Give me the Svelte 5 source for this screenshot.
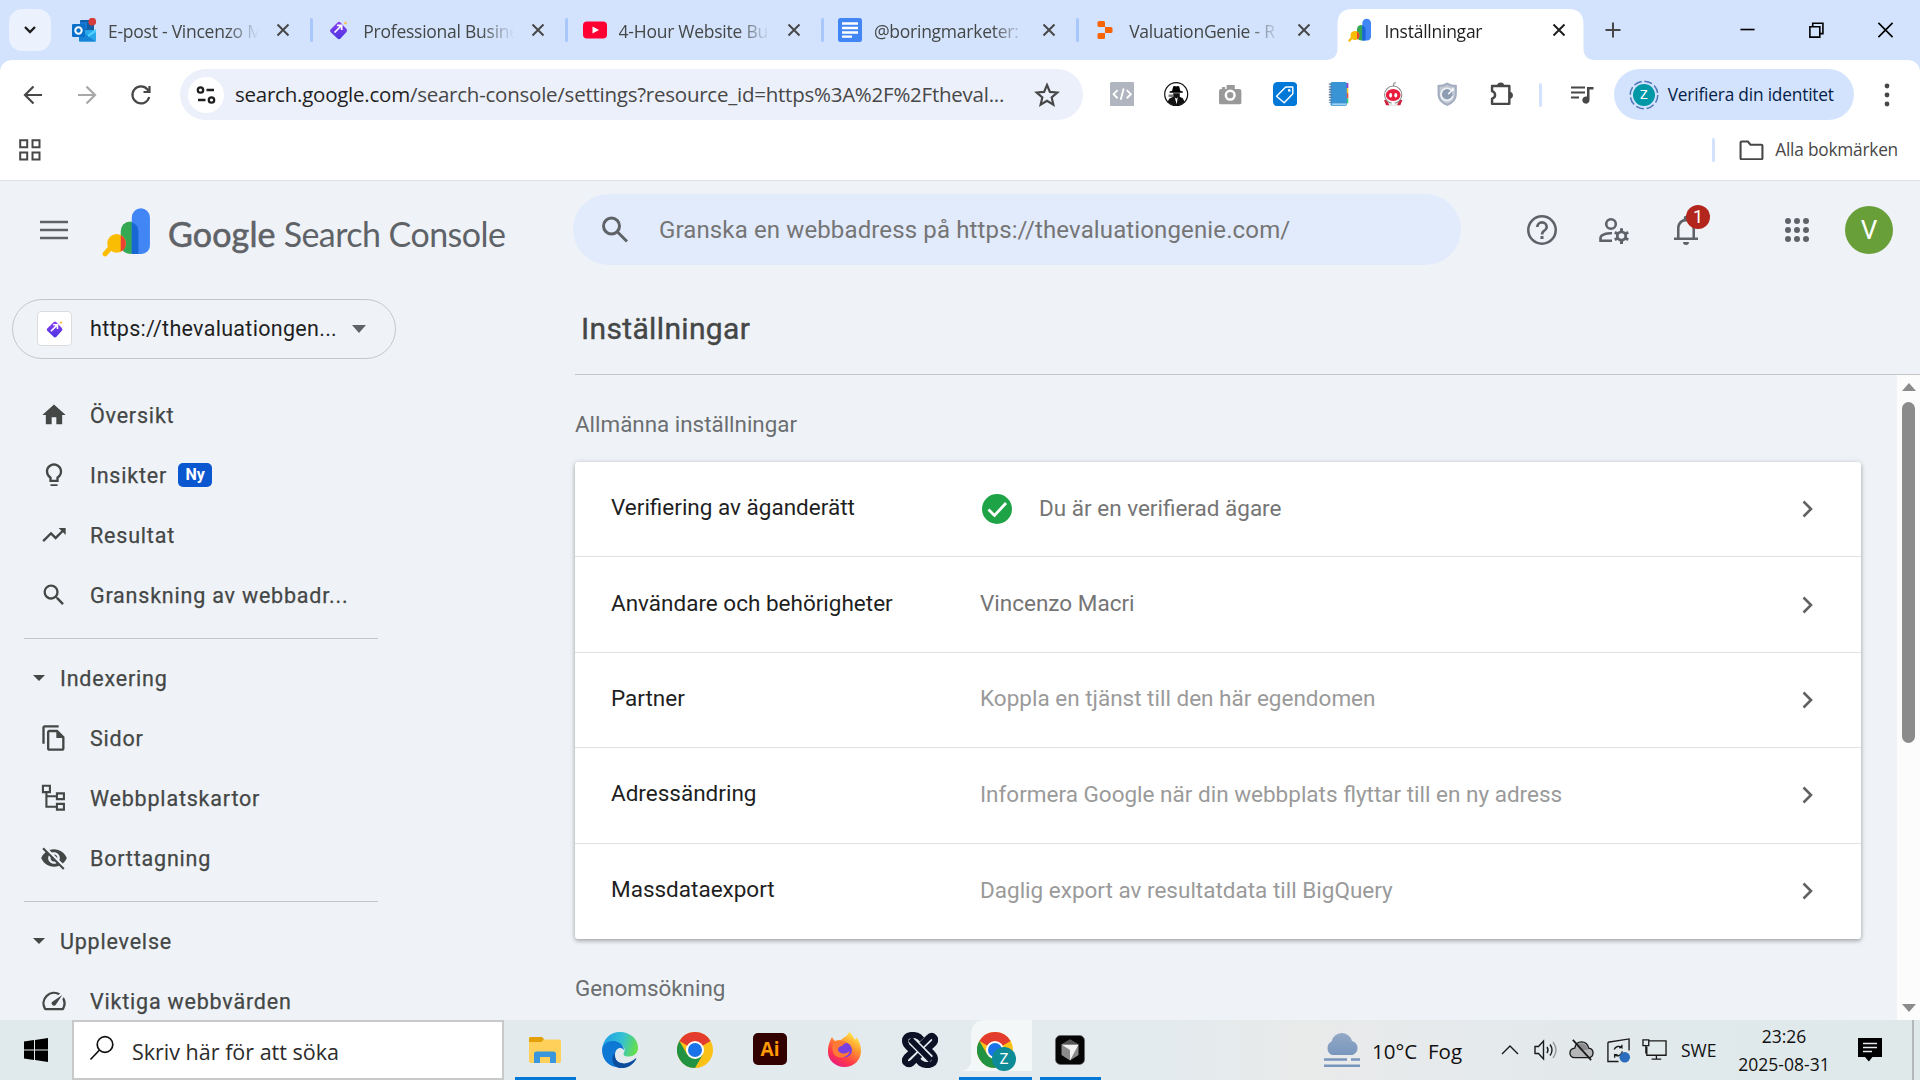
<script>
  const gem = '<defs><linearGradient id="gem" x1="0" y1="0" x2="0" y2="1"><stop offset="0" stop-color="#8a3ff0"/><stop offset="1" stop-color="#4b35e0"/></linearGradient></defs><path d="M3.5 11.5 10.5 4.5q1.5-1.5 3 0l6 6.5q1.2 1.5 0 3L13.5 20.500q-1.500 1.500-3 0L3.500 14q-1-1.300 0-2.500z" fill="url(#gem)"/><path d="m7.500 14.500 7-7M10 7.300h4.700V12" stroke="#fff" stroke-width="1.700" fill="none"/><circle cx="18.500" cy="5" r="1.300" fill="#fbbf4a"/>';
  const gsc = '<path d="m1.500 22.500 4-4.500" stroke="#fbbc04" stroke-width="2.400" stroke-linecap="round"/><rect x="9" y="7" width="9" height="15.500" rx="4.500" fill="#34a853"/><path d="M14.300 5a4.350 4.350 0 0 1 8.700 0v13a4 4 0 0 1-4 4.500h-4.700z" fill="#4285f4"/><path d="M14.300 7.400a4.500 4.500 0 0 1 3.200 4.100v11h-3.200z" fill="#1967d2"/><circle cx="7" cy="17.500" r="4.500" fill="#fbbc04"/><path d="M9 13.500a4.500 4.500 0 0 1 0 8z" fill="#ea4335"/>';

  const tabs = [
    { title: 'E-post - Vincenzo M', icon: '<rect x="8" y="2" width="14" height="13" rx="1" fill="#0f5ea8"/><path d="M8 4h7v7H8z" fill="#1976d2"/><path d="M7 12h17v10.500q0 1-1 1H8q-1 0-1-1z" fill="#28a8ea"/><path d="m7 12 17 11.500H8q-1 0-1-1z" fill="#1584d8"/><path d="M16 16.500 24 11v3l-8 5z" fill="#50d0ff"/><rect x="0" y="6" width="13" height="13" rx="1.200" fill="#0a6fc8"/><circle cx="6.500" cy="12.500" r="3.200" fill="none" stroke="#fff" stroke-width="2"/><circle cx="20.300" cy="3.700" r="3.900" fill="#d83b3b"/>' },
    { title: 'Professional Busine', icon: gem },
    { title: '4-Hour Website Bu', icon: '<rect y="3.500" width="24" height="17" rx="4" fill="#ff0033"/><path d="m9.500 8.500 6.500 3.500-6.500 3.500z" fill="#fff"/>' },
    { title: '@boringmarketer:', icon: '<rect width="24" height="24" rx="2.500" fill="#4285f4"/><path d="M4 5.500h16M4 10h16M4 14.500h16M4 18.700h10" stroke="#fff" stroke-width="2.300"/>' },
    { title: 'ValuationGenie - R', icon: '<path d="M4.500 4.500a1.500 1.500 0 0 1 1.500-1.500h4.500a1.500 1.500 0 0 1 1.500 1.500V9H6a1.500 1.500 0 0 1-1.500-1.500zM12 9h6a1.500 1.500 0 0 1 1.500 1.500v3A1.500 1.500 0 0 1 18 15h-6zM4.500 16.500A1.500 1.500 0 0 1 6 15h6v4.500a1.500 1.500 0 0 1-1.500 1.500H6a1.500 1.500 0 0 1-1.500-1.500z" fill="#f96300"/>' },
    { title: 'Inställningar', icon: gsc, active: true }
  ];

  const extensions = [
    '<rect width="24" height="24" rx="1.500" fill="#b1b5c0"/><path d="m7.500 8-4 4 4 4m9-8 4 4-4 4M13.500 6.500l-3 11" stroke="#fff" stroke-width="1.800" fill="none"/>',
    '<circle cx="12" cy="12" r="11.300" fill="#fff" stroke="#111" stroke-width="1.200"/><path d="M8 8.500 9 4.500q1.500-1 3 0 1.500-1 3 0l1 4 2.500.8v1.200H5.500V9.300z" fill="#000"/><path d="M9 11h6.500v3.500l3 1.500 2 4Q12 26.500 3.500 20L5 16.500l4-2z" fill="#111"/><path d="m10.500 15 1.500 1.500 1.500-1.500-1 7z" fill="#fff"/><path d="M4.500 13.500h5" stroke="#777" stroke-width="2.400"/>',
    '<path d="M1 9Q1 7 3 7h1V5h3v2h1.500V3h8v4H21q2 0 2 2v11.500q0 1.500-1.500 1.500h-19Q1 22 1 20.500z" fill="#999"/><circle cx="12" cy="13" r="4.300" fill="none" stroke="#fff" stroke-width="2.400"/>',
    '<rect width="24" height="24" rx="4.500" fill="#0078d7"/><path d="M3.500 14 12.500 5h7v6.500L11 20.500z" fill="none" stroke="#fff" stroke-width="1.400" stroke-linejoin="round"/><circle cx="16" cy="8.300" r="1.300" fill="#fff"/>',
    '<path d="M18 1h3v5h-3z" fill="#9c35c9"/><path d="M18 6h3v5h-3z" fill="#f7c52d"/><path d="M18 11h3v5h-3z" fill="#ef4d3c"/><path d="M18 16h3v5h-3z" fill="#3ccb72"/><rect x="3.500" width="16" height="23.500" rx="1.500" fill="#3994d6"/><path d="M5 21h14v2H5z" fill="#9fd0f0"/><path d="M3.300 1.500v19" stroke="#55799a" stroke-width="3" stroke-dasharray="1.300 1.300"/>',
    '<path d="M12.500 4.500V2q.5-1.700 2-1" stroke="#777" fill="none"/><path d="M3 18q9-4 18 0l-2 5h-4l-3-3-3 3H5z" fill="#d3203a"/><path d="M6 18h12l-2.500 5.500h-7z" fill="#e8e8e8"/><circle cx="12" cy="12.500" r="8.500" fill="#fff" stroke="#888"/><ellipse cx="12" cy="12.800" rx="7.300" ry="6" fill="#e91d3e"/><ellipse cx="9.500" cy="13" rx="1.400" ry="2.200" fill="#fff"/><ellipse cx="14.500" cy="13" rx="1.400" ry="2.200" fill="#fff"/><circle cx="12" cy="21" r="1.500" fill="#fff"/>',
    '<path d="M2.500 3Q8 3 12 .5 16 3 21.500 3v9q0 8-9.500 11.500Q2.500 20 2.500 12z" fill="#a3adc0"/><path d="M4.500 5Q8.500 5 12 3q3.500 2 7.500 2v7q0 6.500-7.500 9.500Q4.500 18.500 4.500 12z" fill="#c3cad6"/><circle cx="12" cy="12" r="5" fill="#8e9cb1"/><path d="M16.500 8.500a6 6 0 1 0 1 5.500M13 12l4-4" stroke="#eef1f5" stroke-width="1.600" fill="none"/><circle cx="17.500" cy="7.500" r="1.300" fill="#fff"/>'
  ];

  const primaryNav = [
    { label: 'Översikt', icon: '<path d="M10 20v-6h4v6h5v-8h3L12 3 2 12h3v8z"/>' },
    { label: 'Insikter', badge: 'Ny', icon: '<path d="M9 21.500h6V20H9zm.500.500M12 2C8.140 2 5 5.140 5 9c0 2.380 1.190 4.470 3 5.740V18h8v-3.260c1.810-1.270 3-3.360 3-5.740 0-3.860-3.140-7-7-7zm2.850 11.100-.850.600V16h-4v-2.300l-.850-.600A4.997 4.997 0 0 1 7 9c0-2.760 2.240-5 5-5s5 2.240 5 5c0 1.630-.800 3.160-2.150 4.100z"/>' },
    { label: 'Resultat', icon: '<path d="m16 6 2.290 2.290-4.880 4.880-4-4L2 16.590 3.410 18l6-6 4 4 6.300-6.290L22 12V6z"/>' },
    { label: 'Granskning av webbadr...', icon: '<path d="M15.500 14h-.790l-.280-.270A6.471 6.471 0 0 0 16 9.500 6.500 6.500 0 1 0 9.500 16c1.610 0 3.090-.590 4.230-1.570l.270.280v.790l5 4.990L20.490 19zm-6 0C7.010 14 5 11.990 5 9.500S7.010 5 9.500 5 14 7.010 14 9.500 11.990 14 9.500 14z"/>' }
  ];
  const indexNav = [
    { label: 'Sidor', icon: '<path d="M16 1H4c-1.100 0-2 .900-2 2v14h2V3h12zm-1 4H8c-1.100 0-1.990.900-1.990 2L6 21c0 1.100.890 2 1.990 2H19c1.100 0 2-.900 2-2V11zM8 21V7h6v5h5v9z"/>' },
    { label: 'Webbplatskartor', icon: '<path d="M2.500 1.500h6v5.500h-6zM14.500 8h6v5h-6zM14.500 17h6v5h-6zM5.500 7v12.500h9M5.500 10.500h9" fill="none" stroke="#444746" stroke-width="1.800"/>' },
    { label: 'Borttagning', icon: '<path d="M12 7c2.760 0 5 2.240 5 5 0 .650-.130 1.260-.360 1.830l2.920 2.920c1.510-1.260 2.700-2.890 3.430-4.750-1.730-4.390-6-7.500-11-7.500-1.400 0-2.740.250-3.980.700l2.160 2.160C10.740 7.130 11.350 7 12 7zM2 4.270l2.280 2.280.460.460A11.804 11.804 0 0 0 1 12c1.730 4.390 6 7.500 11 7.500 1.550 0 3.030-.300 4.380-.840l.420.420L19.730 22 21 20.730 3.270 3zM7.530 9.800l1.550 1.550c-.050.210-.080.430-.080.650 0 1.660 1.340 3 3 3 .220 0 .440-.030.650-.080l1.550 1.550c-.670.330-1.410.530-2.200.530-2.760 0-5-2.240-5-5 0-.790.200-1.530.530-2.200zm4.310-.780 3.150 3.150.020-.160c0-1.660-1.340-3-3-3z"/>' }
  ];
  const experienceNav = [
    { label: 'Viktiga webbvärden', icon: '<path d="m20.380 8.570-1.230 1.850a8 8 0 0 1-.220 7.580H5.070A8 8 0 0 1 15.580 6.850l1.850-1.230A10 10 0 0 0 3.350 19a2 2 0 0 0 1.720 1h13.850a2 2 0 0 0 1.740-1 10 10 0 0 0-.270-10.440zm-9.790 6.840a2 2 0 0 0 2.830 0l5.660-8.490-8.490 5.660a2 2 0 0 0 0 2.830z"/>' }
  ];

  const settings = [
    { name: 'Verifiering av äganderätt', value: 'Du är en verifierad ägare', verified: true },
    { name: 'Användare och behörigheter', value: 'Vincenzo Macri' },
    { name: 'Partner', value: 'Koppla en tjänst till den här egendomen', hint: true },
    { name: 'Adressändring', value: 'Informera Google när din webbplats flyttar till en ny adress', hint: true },
    { name: 'Massdataexport', value: 'Daglig export av resultatdata till BigQuery', hint: true }
  ];

  const chrome = '<circle cx="18" cy="18" r="18" fill="#fbc116"/><path d="M18 18 2.400 9A18 18 0 0 1 33.600 9z" fill="#e33b2e"/><path d="M2.400 9A18 18 0 0 0 18 36l7.800-13.500L18 26l-7.800-3.500z" fill="#229342"/><circle cx="18" cy="18" r="9" fill="#fff"/><circle cx="18" cy="18" r="7" fill="#1a73e8"/>';
  const apps = [
    { name: 'explorer', open: true, icon: '<path d="M2 6.500Q2 5 3.500 5h10l2.500 2.500h16q2 0 2 2V29q0 2-2 2H4q-2 0-2-2z" fill="#ffd05a"/><path d="M2 6.500Q2 5 3.500 5h11.500l2 2-2.500 3H2z" fill="#e3a008"/><path d="M7 31V22q0-2.500 2.500-2.500h17q2.500 0 2.500 2.500v9h-6v-6H13v6z" fill="#3a96dd"/>' },
    { name: 'edge', icon: '<defs><linearGradient id="ed" x1="0" x2="1" y1=".3" y2=".5"><stop stop-color="#1f9fe8"/><stop offset=".55" stop-color="#35c1d2"/><stop offset="1" stop-color="#66df4a"/></linearGradient></defs><path d="M0 18C1 7 8 0 18 0s18 7 18 15.500c0 6-4.500 9-9.500 9-4 0-6-1.500-4.500-4 2-4-1-8.500-6-8.500C9 12 2 14 0 18z" fill="url(#ed)"/><path d="M0 18C1 11 8 8 14 9.500c5 1.200 8 5 8 8.500-3-4-9-2-9 5 0 7 6 11 12 10.500C14 39 0 32 0 18z" fill="#0f78d4"/><path d="M13 21c-2 6 4 12 12 10 3-.700 6-2.500 8.500-4.500.800-.500 1 .200.500 1C30 34 23 37.500 16.500 35.800 9 33 9 24 13 21z" fill="#0c4c9c"/>' },
    { name: 'chrome', icon: chrome },
    { name: 'illustrator', icon: '<rect x="1" y="1" width="34" height="32" rx="5" fill="#330000"/><text x="18" y="24" text-anchor="middle" font-family="Open Sans, sans-serif" font-weight="700" font-size="19" fill="#ff9a00">Ai</text>' },
    { name: 'firefox', icon: '<defs><linearGradient id="fx" x1=".8" y1="0" x2=".2" y2="1"><stop stop-color="#fff44f"/><stop offset=".35" stop-color="#ff9a2e"/><stop offset=".7" stop-color="#ff3b47"/><stop offset="1" stop-color="#e31587"/></linearGradient></defs><path d="M5 5c1 2 2 3 3 4q3-1.500 6-1C17 5 21 4 22 0c4 3 5 6 6 8 1-1 1-2 1-3 3 3 5 8 5 14 0 9-7 16-16.500 16S1 28 1 20c0-6 1-9 4-15z" fill="url(#fx)"/><circle cx="17.500" cy="18" r="7.500" fill="#7a3fe0"/><path d="M6 12q4-4 9-3 3 0 4 2-3 1-4 3-3 0-4 3c0 5 8 6 12 2-2 8-14 9-17 1-1-3-1-6 0-8z" fill="#ff7a36"/>' },
    { name: 'knot', icon: '<g fill="none" stroke-linejoin="round" stroke-linecap="butt"><g stroke="#0c1126" stroke-width="6"><path d="M20 7.500 17.500 5Q14 2.500 9 3 3 4 3 9q0 3 3 6l4.500 4"/><path d="M16 28.500 18.500 31q3.500 2.500 8.500 2 6-1 6-6 0-3-3-6l-4.500-4"/><path d="M14 18 26 6q3.500-3.500 6-1t0 6L22 20.500"/><path d="M14.500 15.500 4.500 25q-3 3.500-.5 6t6 0L22 19"/></g><path d="m10 9 18 18" stroke="#e3ebee" stroke-width="8.500"/><path d="M8 7 29 28.500" stroke="#0c1126" stroke-width="5.500"/></g>' },
    { name: 'chrome-profile', open: true, active: true, icon: chrome },
    { name: 'cursor', open: true, icon: '<rect x="3.500" y="3.500" width="29" height="29" rx="5" fill="#060606" stroke="#666" stroke-width=".7"/><path d="m18 7.500 8.500 5v10.500L18 28.500 9.500 23V12.500z" fill="#8a8a8a"/><path d="M9.500 12.500h17L18 28.500V18z" fill="#f2f2f2"/><path d="m18 7.500 8.500 5h-17z" fill="#555"/>' }
  ];
</script>

{#snippet svg(inner, cls, box = 24)}
  <svg class={cls} viewBox="0 0 {box} {box}" aria-hidden="true">{@html inner}</svg>
{/snippet}

{#snippet navItem(item)}
  <a class="nav-item" href="#nav">
    {@render svg(item.icon, 'nav-icon')}
    <span class="t">{item.label}</span>
    {#if item.badge}<b class="new">{item.badge}</b>{/if}
  </a>
{/snippet}

{#snippet navGroup(label, items)}
  <hr class="rule" />
  <div class="group"><i class="caret"></i><span class="t">{label}</span></div>
  {#each items as item}{@render navItem(item)}{/each}
{/snippet}

<div class="screen">
  <header class="tabstrip">
    <button class="tab-search" aria-label="Sök bland flikar"><svg width="16" height="16" viewBox="0 0 16 16"><path d="m3 5 5 5 5-5" fill="none" stroke="#1f1f1f" stroke-width="2.400" /></svg></button>
    {#each tabs as tab, i}
      <div class="tab" class:active={tab.active} class:sep={i < 4}>
        {@render svg(tab.icon, 'favicon')}
        <span class="tab-title"><span class="t">{tab.title}</span></span>
        <svg class="close" viewBox="0 0 14 14"><path d="m1.500 1.500 11 11m0-11-11 11" /></svg>
      </div>
    {/each}
    <svg class="new-tab" viewBox="0 0 16 16"><path d="M8 .5v15M.5 8h15" /></svg>
    <div class="window-controls">
      <svg viewBox="0 0 18 18"><path d="M1.500 8.500h15" /></svg>
      <svg viewBox="0 0 18 18"><path d="M2 5.500h10.500V16.500H2zM5 5.500V1.800h10.800v11h-3.300" /></svg>
      <svg viewBox="0 0 18 18"><path d="m1.500 1.500 15 15m0-15-15 15" /></svg>
    </div>
  </header>

  <div class="toolbar">
    <div class="history">
      <svg viewBox="0 0 24 24"><path d="M21 12H4m8.500-8.500L4 12l8.500 8.500" /></svg>
      <svg class="off" viewBox="0 0 24 24"><path d="M3 12h17m-8.500-8.500L20 12l-8.500 8.500" /></svg>
      <svg viewBox="0 0 24 24"><path d="M20.200 14A8.500 8.500 0 1 1 18.500 6.500L20 8.500M20.500 3v6h-6" /></svg>
    </div>
    <div class="omnibox">
      <span class="site"><svg viewBox="0 0 24 24"><circle cx="6.500" cy="7" r="2.700" /><path d="M12.500 7H20M4 17h7.500" /><circle cx="17.500" cy="17" r="2.700" /></svg></span>
      <span class="url t"><em>search.google.com</em>/search-console/settings?resource_id=https%3A%2F%2Ftheval...</span>
      <svg class="star" viewBox="0 0 24 24"><path d="m12 2.800 2.700 6.300 6.800.6-5.200 4.500 1.600 6.700L12 17.300l-5.900 3.600 1.600-6.700-5.200-4.500 6.800-.6z" /></svg>
    </div>
    <div class="extensions">
      {#each extensions as e}{@render svg(e, 'ext')}{/each}
      <svg class="ext" viewBox="0 0 24 24"><path d="M3 4h17v17.500H3v-5q3-1 3-3.700T3 9z" fill="none" stroke="#474747" stroke-width="2.400" stroke-linejoin="round" /><path d="M8.500 4a3 3 0 0 1 6 0zM20 10a3 3 0 0 1 0 6z" fill="#474747" stroke="#474747" /></svg>
    </div>
    <i class="divider"></i>
    <svg class="music" viewBox="0 0 24 24"><path d="M1 5.500h14M1 10.500h14M1 15.500h8" stroke="#474747" stroke-width="2" /><path d="M17 5h6.500v2.500h-4V18a3.600 3.600 0 1 1-2.500-3.400z" fill="#474747" /></svg>
    <div class="profile">
      <span class="ring"><svg viewBox="0 0 30 30"><circle cx="15" cy="15" r="13.800" /></svg><b>Z</b></span>
      <span class="t">Verifiera din identitet</span>
    </div>
    <svg class="kebab" viewBox="0 0 8 28"><circle cx="4" cy="5" r="2.400" /><circle cx="4" cy="14" r="2.400" /><circle cx="4" cy="23" r="2.400" /></svg>
  </div>

  <div class="bookmarks">
    <svg class="grid" viewBox="0 0 22 22"><path d="M1.200 1.200h7v7h-7zM13.500 1.200h7v7h-7zM1.200 13.500h7v7h-7zM13.500 13.500h7v7h-7z" /></svg>
    <i class="divider"></i>
    <svg class="folder" viewBox="0 0 24 20"><path d="M1.500 2.500q0-1 1-1h6l2.500 3h10.500q1 0 1 1v12q0 1-1 1h-19q-1 0-1-1z" /></svg>
    <span class="t">Alla bokmärken</span>
  </div>

  <div class="page">
    <header class="console-bar">
      <svg class="menu" viewBox="0 0 28 20"><path d="M0 2h28M0 10h28M0 18h28" /></svg>
      {@render svg(gsc, 'logo')}
      <h1><span class="google t">Google</span><span class="sc t">Search Console</span></h1>
      <div class="inspect">
        <svg class="lens" viewBox="0 0 28 28"><circle cx="10.500" cy="10" r="8" /><path d="m16.500 16 9.500 9.500" /></svg>
        <span class="t">Granska en webbadress på https://thevaluationgenie.com/</span>
      </div>
      <div class="actions">
        <svg class="help" viewBox="0 0 24 24"><path d="M11 18h2v-2h-2zm1-16A10 10 0 1 0 12 22 10 10 0 0 0 12 2zm0 18.300A8.300 8.300 0 1 1 12 3.700a8.300 8.300 0 0 1 0 16.600zM12 6a4 4 0 0 0-4 4h1.800a2.200 2.200 0 0 1 4.400 0c0 2-3 1.750-3 5H13c0-2.250 3-2.500 3-5a4 4 0 0 0-4-4z" /></svg>
        <svg class="users" viewBox="0 0 32 32"><circle cx="13" cy="10" r="4.800" fill="none" stroke="#5f6368" stroke-width="2.600" /><path d="M14 19.300q-6-.5-10 2-1.500 1-1.500 2.700v2.700h11.500" fill="none" stroke="#5f6368" stroke-width="2.600" /><circle cx="23.500" cy="22" r="4.200" fill="none" stroke="#5f6368" stroke-width="2.800" /><path d="M23.500 14.200v3M23.500 27v3M16.800 18.200l2.600 1.500M27.600 24.300l2.600 1.500M16.800 25.800l2.600-1.500M27.600 19.700l2.600-1.500" stroke="#5f6368" stroke-width="3" /></svg>
        <span class="bell"><svg viewBox="0 0 24 24"><path d="M12 22a2 2 0 0 0 2-2h-4a2 2 0 0 0 2 2zm6-6v-5c0-3.070-1.630-5.640-4.500-6.320V4a1.500 1.500 0 0 0-3 0v.680C7.640 5.360 6 7.920 6 11v6H4v1.700h16V17h-2zm-1.700 1H7.700v-6c0-2.480 1.510-4.700 4.300-4.700s4.300 2.220 4.300 4.700z" /></svg><b>1</b></span>
        <svg class="waffle" viewBox="0 0 24 24"><g><circle cx="3" cy="3" r="3" /><circle cx="12" cy="3" r="3" /><circle cx="21" cy="3" r="3" /><circle cx="3" cy="12" r="3" /><circle cx="12" cy="12" r="3" /><circle cx="21" cy="12" r="3" /><circle cx="3" cy="21" r="3" /><circle cx="12" cy="21" r="3" /><circle cx="21" cy="21" r="3" /></g></svg>
        <span class="avatar">V</span>
      </div>
    </header>

    <div class="body">
      <nav class="sidebar">
        <div class="property">
          <span class="thumb">{@render svg(gem, 'thumb-icon')}</span>
          <span class="t">https://thevaluationgen...</span>
          <i class="caret big"></i>
        </div>
        {#each primaryNav as item}{@render navItem(item)}{/each}
        {@render navGroup('Indexering', indexNav)}
        {@render navGroup('Upplevelse', experienceNav)}
      </nav>

      <main>
        <h2><span class="t">Inställningar</span></h2>
        <div class="scroller">
          <div class="content">
            <h3><span class="t">Allmänna inställningar</span></h3>
            <section class="card">
              {#each settings as s}
                <div class="row">
                  <span class="name t">{s.name}</span>
                  {#if s.verified}<svg class="check" viewBox="0 0 30 30"><circle cx="15" cy="15" r="15" fill="#1ea446" /><path d="m6.500 15.500 6 6L24 9" fill="none" stroke="#fff" stroke-width="2.800" /></svg>{/if}
                  <span class="value t" class:hint={s.hint}>{s.value}</span>
                  <svg class="chevron" viewBox="0 0 12 18"><path d="m1.500 1.500 7.500 7.500-7.500 7.500" /></svg>
                </div>
              {/each}
            </section>
            <h3><span class="t">Genomsökning</span></h3>
          </div>
          <div class="scrollbar"><i class="up"></i><i class="thumb-bar"></i><i class="down"></i></div>
        </div>
      </main>
    </div>
  </div>

  <footer class="taskbar">
    <svg class="start" viewBox="0 0 24 24"><path d="M0 3.500 10 2v9.500H0zM11 1.900 24 0v11.500H11zM0 12.500h10V22L0 20.500zM11 12.500h13V24l-13-1.900z" /></svg>
    <div class="find"><svg viewBox="0 0 26 26"><circle cx="16" cy="9.500" r="7.800" /><path d="M10.500 15 1.500 24.500" /></svg><span class="t">Skriv här för att söka</span></div>
    <div class="apps">
      {#each apps as app}
        <div class="app" class:open={app.open} class:active={app.active}>
          {@render svg(app.icon, 'app-icon', 36)}
          {#if app.active}<b class="app-badge">Z</b>{/if}
        </div>
      {/each}
    </div>
    <div class="tray">
      <svg class="weather" viewBox="0 0 36 36"><defs><linearGradient id="fog" x1="0" y1="0" x2="0" y2="1"><stop stop-color="#93a9c6" /><stop offset="1" stop-color="#7896bd" /></linearGradient></defs><path d="M8 23a7.500 7.500 0 0 1-.5-13.500A10.500 10.500 0 0 1 28 9a7.300 7.300 0 0 1 .5 14z" fill="url(#fog)" /><path d="M0 27.500h23M27 27.500h9M0 33.700h36" stroke="#7896bd" stroke-width="2.600" /></svg>
      <span class="temp t">10°C</span><span class="fog t">Fog</span>
      <svg class="up-arrow" viewBox="0 0 18 10"><path d="m1 9 8-8 8 8" /></svg>
      <svg class="vol" viewBox="0 0 24 24"><path d="M1 8.500h3.500L9.500 3v18l-5-5.500H1zM13 9q2 3 0 6M16 6.500q4 5.500 0 11" /><path d="M19 4q6 8 0 16" class="dim" /></svg>
      <svg class="cloud" viewBox="0 0 26 24"><path d="M6 20.500q-5-.5-5-5t5-5Q7 4 13 4t7.500 6.500q4.500.5 4.500 5t-5 5z" fill="#b4b6b8" /><path d="M8 8q5-5 10 0l2 4-8 1z" fill="#8a8c8e" stroke="none" /><path d="m4 2 19 21" stroke-width="1.800" /></svg>
      <svg class="sync" viewBox="0 0 26 28"><path d="M2 5.500 24 2v12M2 5.500v20h11" /><path d="M8.500 13a5 5 0 0 1 8-2v-3m0 3h-3M17 15a5 5 0 0 1-8 3.500v3m0-3h3" /><circle cx="19.500" cy="21" r="5.500" /></svg>
      <svg class="net" viewBox="0 0 26 24"><path d="M7 3h18v15H5V9M15 18v4M10 22h10M1 2h6v6H1zM4 8v8" /></svg>
      <span class="lang t">SWE</span>
      <div class="clock"><span class="t">23:26</span><span class="t">2025-08-31</span></div>
      <svg class="notes" viewBox="0 0 24 24"><path d="M0 0h24v19H14.500l-3.700 4.500L7 19H0z" /><path d="M5 5.500h14M5 9.500h14M5 13.500h9" stroke="#e6ebed" stroke-width="1.300" /></svg>
    </div>
    <i class="desktop-edge"></i>
  </footer>
</div>

<style>
  :global(body) { margin: 0; }
  .screen { width: 1920px; height: 1080px; overflow: hidden; display: flex; flex-direction: column; font-family: 'Open Sans', 'Noto Sans', sans-serif; background: #fff; }
  .screen :global(*) { box-sizing: border-box; }
  .screen :global(svg) { display: block; flex: none; }
  .t { white-space: nowrap; }
  button { border: 0; padding: 0; }

  /* Browser tabs */
  .tabstrip { height: 72px; margin-bottom: -12px; flex: none; background: #d3e3fd; display: flex; align-items: flex-start; }
  .tab-search { width: 42px; height: 42px; margin: 9px 6px 0 9px; border-radius: 13px; background: #ebf2fe; display: grid; place-items: center; }
  .tab { position: relative; width: 255.300px; height: 60px; padding-left: 15px; display: flex; align-items: center; flex: none; }
  .tab.sep::after { content: ''; flex: none; margin-left: 20px; width: 3px; height: 24px; background: #a8c7fa; border-radius: 2px; }
  .tab :global(.favicon) { width: 24px; height: 24px; margin-right: 12px; z-index: 1; }
  .tab-title { flex: none; width: 160px; margin-right: 8px; font-size: 17.500px; letter-spacing: -0.250px; color: #444746; z-index: 1; line-height: 30px; padding-top: 2px; mask-image: linear-gradient(90deg, #000 118px, transparent 151px); }
  .active .tab-title { color: #1f1f1f; }
  .close { width: 14px; height: 14px; fill: none; stroke: #474747; stroke-width: 2; z-index: 1; }
  .active .close { stroke: #1f1f1f; }
  .active::before { content: ''; position: absolute; left: -8px; top: 9px; width: 270px; height: 51px; clip-path: path('M12 39V15Q12 0 27 0H243Q258 0 258 15V39Q258 51 270 51H0Q12 51 12 39Z'); background: #fff; }
  .new-tab { width: 16px; height: 16px; margin: 22px 0 0 16px; fill: none; stroke: #474747; stroke-width: 2; }
  .window-controls { display: flex; gap: 52px; margin: 21px 26px 0 auto; }
  .window-controls svg { width: 17px; height: 18px; fill: none; stroke: #000; stroke-width: 1.700; }

  /* Address bar */
  .toolbar { height: 69px; flex: none; position: relative; border-radius: 12px 12px 0 0; background: #fff; padding-top: 9px; display: flex; align-items: flex-start; }
  .history { display: flex; gap: 30px; padding: 14px 0 0 21px; width: 180px; }
  .history svg { width: 24px; height: 24px; fill: none; stroke: #474747; stroke-width: 2.200; }
  .history .off { stroke: #a8a8a8; }
  .omnibox { width: 903px; height: 51px; border-radius: 26px; background: #ecf0fa; display: flex; align-items: center; }
  .site { width: 36px; height: 36px; border-radius: 50%; background: #fff; margin: 0 11px 0 8px; display: grid; place-items: center; }
  .site svg { width: 24px; fill: none; stroke: #1f1f1f; stroke-width: 2.300; }
  .url { font-size: 20.500px; color: #474747; letter-spacing: -0.240px; width: 799px; padding-bottom: 2px; }
  .url em { font-style: normal; color: #1f1f1f; }
  .star { width: 26px; fill: none; stroke: #474747; stroke-width: 2; }
  .extensions { display: flex; gap: 29.800px; padding: 13px 0 0 27px; }
  .extensions :global(.ext) { width: 24.400px; height: 24.400px; }
  .divider { width: 3px; height: 24px; background: #d3e3fd; border-radius: 2px; }
  .toolbar .divider { margin: 14px 28px 0 25px; }
  .music { width: 24px; height: 24px; margin: 13px 20px 0 0; }
  .profile { width: 240px; height: 51px; border-radius: 26px; background: #d3e3fd; color: #041e49; display: flex; align-items: center; font-size: 17.300px; letter-spacing: -0.180px; padding-left: 15px; }
  .ring { position: relative; width: 30px; height: 30px; margin-right: 9px; display: grid; place-items: center; }
  .ring svg { position: absolute; inset: 0; fill: none; stroke: #4f77b8; stroke-width: 1.500; stroke-dasharray: 8 2.840; }
  .ring b { width: 22px; height: 22px; border-radius: 50%; background: #0097a7; color: #fff; font: 400 13px/22px Roboto, sans-serif; text-align: center; }
  .kebab { width: 8px; height: 28px; margin: 12px 0 0 29px; fill: #474747; }
  .bookmarks { height: 51px; flex: none; display: flex; align-items: center; padding: 0 22px 9px 19px; color: #474747; font-size: 17.300px; letter-spacing: -0.220px; }
  .bookmarks .t { padding-bottom: 2px; }
  .grid { width: 22px; fill: none; stroke: #474747; stroke-width: 2; margin-right: auto; }
  .bookmarks .divider { margin-right: 24px; }
  .folder { width: 25px; fill: none; stroke: #474747; stroke-width: 2; margin-right: 11px; }

  /* Console header */
  .page { flex: 1; min-height: 0; border-top: 1.500px solid #dfe2e5; background: #eff3f8; font-family: Roboto, sans-serif; display: flex; flex-direction: column; overflow: hidden; }
  .console-bar { height: 98px; flex: none; display: flex; align-items: center; padding: 0 27px 0 40px; }
  .menu { width: 28px; stroke: #5f6368; stroke-width: 2.700; margin-right: 34px; }
  .console-bar :global(.logo) { width: 50px; height: 50px; margin: 4px 16px 0 0; }
  h1 { margin: 6px 0 0; font: 400 34px Lato, sans-serif; color: #5f6368; width: 405px; display: flex; gap: 8px; }
  .google { letter-spacing: .15px; -webkit-text-stroke: .6px #5f6368; }
  .sc { letter-spacing: -0.550px; }
  .inspect { width: 888px; height: 71px; margin-top: -2px; border-radius: 36px; background: #e2ebfc; display: flex; align-items: center; padding: 1px 0 0 28px; font-size: 24px; letter-spacing: .13px; color: #757575; }
  .lens { width: 28px; fill: none; stroke: #5f6368; stroke-width: 3; margin-right: 30px; }
  .actions { display: flex; align-items: center; margin-left: auto; }
  .help { width: 36px; fill: #5f6368; margin-right: 38px; }
  .users { width: 32px; margin-right: 38px; }
  .bell { position: relative; width: 36px; height: 36px; margin-right: 81px; }
  .bell svg { fill: #5f6368; }
  .bell b { position: absolute; left: 18px; top: -7px; width: 24px; height: 24px; border-radius: 50%; background: #b3261e; color: #fff; font: 400 18px/24px Roboto, sans-serif; text-align: center; }
  .waffle { width: 24px; fill: #5f6368; margin-right: 36px; }
  .avatar { width: 48px; height: 48px; border-radius: 50%; background: #689f38; color: #fff; font-size: 26px; line-height: 48px; text-align: center; }

  /* Sidebar */
  .body { flex: 1; display: flex; min-height: 0; }
  .sidebar { width: 575px; overflow: hidden; }
  .property { width: 384px; height: 60px; margin: 20px 0 26px 12px; border: 1px solid #c4c7c5; border-radius: 30px; display: flex; align-items: center; padding: 0 0 1px 24px; color: #1f1f1f; font-size: 21.500px; letter-spacing: .3px; }
  .thumb { width: 35px; height: 35px; border: 1px solid #dadce0; background: #fff; border-radius: 4px; display: grid; place-items: center; margin-right: 18px; }
  .thumb :global(.thumb-icon) { width: 22px; }
  .nav-item, .group { height: 60px; display: flex; align-items: center; color: #444746; text-decoration: none; font-size: 21.500px; letter-spacing: .8px; -webkit-text-stroke: .25px #444746; padding-left: 40px; }
  .nav-item :global(.nav-icon) { width: 28px; height: 28px; margin-right: 22px; fill: #444746; }
  .new { background: #0b57d0; color: #fff; width: 34px; height: 24px; border-radius: 5px; font: 700 16px/23px Roboto, sans-serif; letter-spacing: 0; -webkit-text-stroke: 0; text-align: center; margin-left: 11px; }
  .rule { border: 0; height: 1px; background: #c4c7c5; margin: 13px 0 9px 24px; width: 354px; }
  .group { padding-left: 33px; gap: 15px; }
  .caret { border: 6px solid transparent; border-top-color: #444746; border-bottom: 0; }
  .caret.big { border-width: 8px 7px 0; margin-left: 15px; border-top-color: #5f6368; }

  /* Settings */
  main { flex: 1; display: flex; flex-direction: column; min-width: 0; }
  h2 { margin: 0; height: 96px; flex: none; border-bottom: 1px solid #c4c7c5; font: 400 30px/99px Roboto, sans-serif; letter-spacing: .35px; -webkit-text-stroke: .4px #444746; color: #444746; padding-left: 6px; }
  .scroller { flex: 1; display: flex; min-height: 0; }
  .content { flex: 1; overflow: hidden; margin-left: -20px; padding-left: 20px; }
  h3 { margin: 0; height: 87px; font-weight: 400; font-size: 22.400px; line-height: 98px; color: #6b6e70; }
  .card { width: 1286px; height: 477px; background: #fff; border-radius: 3px; box-shadow: 0 2px 4px rgba(0, 0, 0, .28), 0 0 6px rgba(0, 0, 0, .1); display: grid; grid-template-rows: repeat(5, 1fr); }
  .row { display: flex; align-items: center; padding: 0 47px 4px 36px; font-size: 22.500px; color: #1f1f1f; border-bottom: 1px solid #dfe1e3; }
  .row:last-child { border: 0; }
  .name { width: 369px; }
  .check { width: 30px; margin: 3px 27px 0 2px; }
  .value { color: #757575; padding-top: 1px; }
  .value.hint { color: #9a9a9a; }
  .chevron { width: 12px; margin: 4px 0 0 auto; fill: none; stroke: #616161; stroke-width: 2.600; }
  .scrollbar { width: 23px; background: #fcfcfc; display: flex; flex-direction: column; align-items: center; padding: 8px 0; }
  .up, .down { border: 7.500px solid transparent; border-bottom: 8px solid #8b8b8b; border-top: 0; }
  .down { border-top: 8px solid #8b8b8b; border-bottom: 0; margin-top: auto; }
  .thumb-bar { width: 13px; height: 341px; margin-top: 11px; border-radius: 7px; background: #8b8b8b; }

  /* Taskbar */
  .taskbar { height: 60px; flex: none; display: flex; align-items: center; background: linear-gradient(90deg, #e0e9eb 0, #e2eaed 25%, #e3ebee 60%, #e9eaea 68%, #e6eaec 76%, #e0e9eb 88%, #e0e9ea); color: #111; }
  .start { width: 24px; margin: 0 24px; }
  .find { width: 432px; height: 60px; border: 2px solid #c8caca; background: #fff; display: flex; align-items: center; padding: 2px 0 0 15px; font-size: 21.500px; color: #2b2b2b; margin-right: 8px; }
  .find svg { width: 26px; margin: -6px 17px 0 0; fill: none; stroke: #111; stroke-width: 1.700; }
  .apps { display: flex; }
  .app { position: relative; width: 75px; height: 60px; display: grid; place-items: center; }
  .app :global(.app-icon) { width: 36px; height: 36px; margin-left: -9px; z-index: 1; }
  .app.open::after { content: ''; position: absolute; left: 3px; bottom: 0; width: 61px; height: 3px; background: #0078d7; }
  .app.active::before { content: ''; position: absolute; left: -3px; top: 0; width: 73px; height: 60px; background: #f3f7f8; }
  .app.active::after { left: -3px; width: 73px; }
  .app-badge { position: absolute; left: 30px; top: 27px; z-index: 2; width: 24px; height: 24px; border-radius: 50%; background: #0d8b96; color: #fff; font: 400 15px/24px Roboto, sans-serif; text-align: center; }
  .tray { display: flex; align-items: center; margin-left: auto; }
  .tray svg { fill: none; stroke: #1a1a1a; stroke-width: 1.400; }
  .tray .weather { width: 36px; stroke: none; margin-right: 12px; }
  .temp, .fog { font-size: 20.500px; padding-top: 1px; }
  .temp { width: 56px; }
  .fog { width: 73px; }
  .tray .up-arrow { width: 18px; margin-right: 15px; }
  .vol { width: 24px; margin-right: 11px; }
  .tray .dim { stroke: #999; }
  .cloud { width: 25px; margin-right: 12px; }
  .sync { width: 25px; margin-right: 11px; }
  .sync circle { fill: #2b6cbd; stroke: none; }
  .net { width: 25px; margin-right: 14px; }
  .lang { font-size: 17.500px; width: 49px; }
  .clock { width: 108px; display: flex; flex-direction: column; align-items: center; font-size: 17.500px; line-height: 28px; }
  .tray .notes { width: 24px; margin: 0 30px 0 20px; fill: #000; stroke: none; }
  .desktop-edge { width: 2px; height: 60px; background: #b3b9bb; margin-right: 6px; }
</style>
